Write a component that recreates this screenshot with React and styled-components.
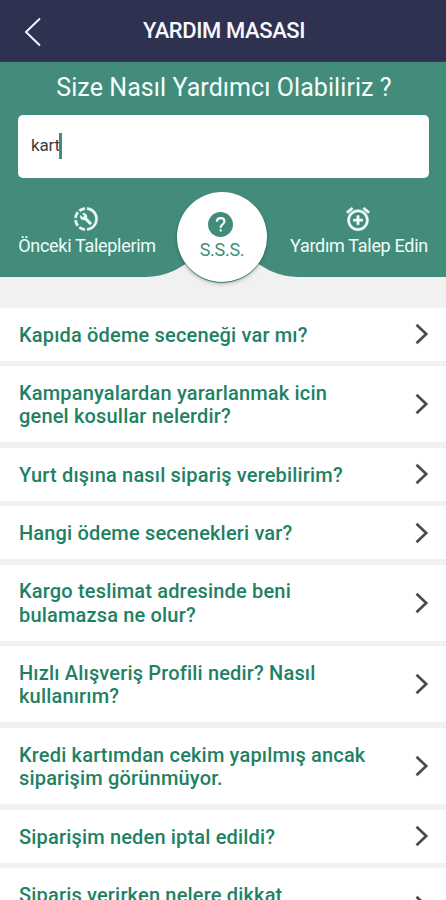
import React from 'react';
import styled, { createGlobalStyle } from 'styled-components';

const GlobalStyle = createGlobalStyle`
  * { box-sizing: border-box; }
  body { margin: 0; background: #f1f1f1; font-family: Roboto, sans-serif; }
`;

const Screen = styled.div`
  width: 446px;
  height: 900px;
  overflow: hidden;
  display: flex;
  flex-direction: column;
  background: #f1f1f1;
`;

const TopBar = styled.header`
  flex: none;
  height: 62px;
  display: grid;
  grid-template-columns: 66px 1fr 64px;
  align-items: center;
  background: #2f3151;
  border-bottom: 1px solid #2c3f53;
`;

const BackButton = styled.button`
  width: 66px;
  height: 62px;
  padding: 2px 0 0;
  border: 0;
  background: none;
  display: flex;
  align-items: center;
  justify-content: center;
`;

const Title = styled.h1`
  margin: 0;
  text-align: center;
  white-space: nowrap;
  font-size: 22px;
  line-height: 60px;
  font-weight: 500;
  letter-spacing: -0.4px;
  color: #f7f8ff;
`;

const Hero = styled.section`
  flex: none;
  position: relative;
  height: 214.5px;
  display: flex;
  flex-direction: column;
  background: #438c7c;
`;

const Heading = styled.h2`
  margin: 0;
  height: 53px;
  padding-left: 2px;
  text-align: center;
  white-space: nowrap;
  font-size: 25px;
  line-height: 51px;
  font-weight: 400;
  letter-spacing: 0.07px;
  color: #f4fffc;
`;

const SearchField = styled.div`
  height: 63px;
  margin: 0 17px 0 18px;
  padding: 0 12px 2px;
  display: flex;
  align-items: center;
  border-radius: 5px;
  background: #fff;
  font-size: 17px;
  line-height: 26px;
  letter-spacing: -0.15px;
  color: #3c3c3c;
`;

const SearchText = styled.span`
  padding: 0 0 2px 1px;
`;

const Caret = styled.span`
  width: 2.5px;
  height: 26px;
  margin-left: -1px;
  background: #438c7c;
`;

const Tabs = styled.nav`
  flex: 1;
  display: flex;
  justify-content: space-between;
  padding: 27px 18px 0 18px;
`;

const Tab = styled.div`
  width: 138px;
  display: flex;
  flex-direction: column;
  align-items: center;
  white-space: nowrap;
  font-size: 18px;
  line-height: 25px;
  letter-spacing: -0.3px;
  color: #eefdf8;
`;

const TabIcon = styled.svg`
  display: block;
  width: 28px;
  height: 28px;
  margin-right: 2px;
  fill: currentColor;
`;

const Notch = styled.svg`
  position: absolute;
  left: 136px;
  bottom: -1px;
  width: 172px;
  height: 41px;
`;

const ActiveTab = styled.div`
  position: absolute;
  left: 177px;
  top: 130px;
  width: 90px;
  height: 90px;
  padding-top: 20px;
  display: flex;
  flex-direction: column;
  align-items: center;
  border-radius: 50%;
  background: #fff;
  box-shadow: 0 1px 1px #277c68, 0 2px 4px rgba(0, 0, 0, 0.22);
  font-size: 18px;
  line-height: 26px;
  letter-spacing: -0.3px;
  color: #438c7c;
`;

const Badge = styled.span`
  width: 25px;
  height: 25px;
  margin-right: 3px;
  border-radius: 50%;
  background: #438c7c;
`;

const List = styled.ul`
  list-style: none;
  margin: 31.5px 0 0;
  padding: 0;
  display: flex;
  flex-direction: column;
  gap: 5.8px;
`;

const Row = styled.li`
  display: flex;
  align-items: center;
  justify-content: space-between;
  height: ${(p) => (p.$lines > 1 ? 76 : 52.5)}px;
  padding: 0 16px 0 19px;
  background: #fff;
`;

const Question = styled.span`
  padding-top: 2px;
  white-space: pre-line;
  font-size: 20px;
  line-height: 23.5px;
  font-weight: 500;
  letter-spacing: 0.17px;
  color: #1f8164;
`;

const Chevron = styled.svg`
  flex: none;
  width: 16px;
  height: 22px;
  fill: none;
  stroke: #4b4b4b;
  stroke-width: 2.7;
`;

const questions = [
  'Kapıda ödeme seceneği var mı?',
  'Kampanyalardan yararlanmak icin\ngenel kosullar nelerdir?',
  'Yurt dışına nasıl sipariş verebilirim?',
  'Hangi ödeme secenekleri var?',
  'Kargo teslimat adresinde beni\nbulamazsa ne olur?',
  'Hızlı Alışveriş Profili nedir? Nasıl\nkullanırım?',
  'Kredi kartımdan cekim yapılmış ancak\nsiparişim görünmüyor.',
  'Siparişim neden iptal edildi?',
  'Sipariş verirken nelere dikkat\n\u00a0',
];

export default function App() {
  return (
    <Screen lang="tr">
      <GlobalStyle />
      <TopBar>
        <BackButton aria-label="Geri">
          <svg width="18" height="30" viewBox="0 0 18 30" fill="none" stroke="#f2f3ff" strokeWidth="2">
            <path d="M16 1.5 2 15l14 13.5" />
          </svg>
        </BackButton>
        <Title>YARDIM MASASI</Title>
      </TopBar>
      <Hero>
        <Heading>Size Nasıl Yardımcı Olabiliriz ?</Heading>
        <SearchField>
          <SearchText>kart</SearchText>
          <Caret />
        </SearchField>
        <Tabs>
          <Tab>
            <TabIcon viewBox="0 0 24 24">
              <path d="M13 2.03v2.02c4.39.54 7.5 4.53 6.96 8.92-.46 3.64-3.32 6.53-6.96 6.96v2c5.5-.55 9.5-5.43 8.95-10.93C21.5 6.25 17.73 2.5 13 2.03M11 2.06C9.05 2.25 7.19 3 5.67 4.26L7.1 5.74C8.22 4.84 9.57 4.26 11 4.06v-2M4.26 5.67C3 7.19 2.25 9.04 2.05 11h2c.19-1.42.75-2.77 1.64-3.9L4.26 5.67M2.06 13c.2 1.96.97 3.81 2.21 5.33l1.42-1.43C4.81 15.77 4.24 14.42 4.06 13h-2M7.1 18.37l-1.43 1.37C7.18 21 9.04 21.79 11 22v-2c-1.42-.18-2.77-.75-3.9-1.63M16.82 15.19l-4.11-4.11c.41-1.04.18-2.26-.68-3.11-.9-.91-2.25-1.09-3.34-.59l1.94 1.94-1.35 1.36-1.99-1.95c-.54 1.09-.29 2.44.59 3.35.86.86 2.08 1.08 3.12.68l4.11 4.1c.18.19.45.19.63 0l1.04-1.03c.22-.18.22-.5.04-.64z" stroke="currentColor" strokeWidth="0.3" />
            </TabIcon>
            Önceki Taleplerim
          </Tab>
          <Tab>
            <TabIcon viewBox="0 0 24 24">
              <path d="M7.88 3.39 6.6 1.86 2 5.71l1.29 1.53 4.59-3.85zM22 5.72l-4.6-3.86-1.29 1.53 4.6 3.86L22 5.72zM12 4c-4.97 0-9 4.03-9 9s4.02 9 9 9c4.97 0 9-4.03 9-9s-4.03-9-9-9zm0 16c-3.87 0-7-3.13-7-7s3.13-7 7-7 7 3.13 7 7-3.13 7-7 7zm1-11h-2v3H8v2h3v3h2v-3h3v-2h-3V9z" stroke="currentColor" strokeWidth="0.4" />
            </TabIcon>
            Yardım Talep Edin
          </Tab>
        </Tabs>
        <Notch viewBox="0 0 172 41">
          <path d="M6 40C28 40 38 34 48 28L86 0l38 28c10 6 20 12 42 12v1H6z" fill="#f1f1f1" />
        </Notch>
        <ActiveTab>
          <Badge>
            <svg width="25" height="25" viewBox="0 0 25 25" fill="none" stroke="#fff" strokeWidth="2.1">
              <path d="M8.8 9.8c0-2.2 1.6-3.7 3.8-3.7s3.8 1.4 3.8 3.4c0 2.8-3.7 2.8-3.7 6.2" />
              <path d="M12.7 17.3v2.2" />
            </svg>
          </Badge>
          S.S.S.
        </ActiveTab>
      </Hero>
      <List>
        {questions.map((q) => (
          <Row key={q} $lines={q.split('\n').length}>
            <Question>{q}</Question>
            <Chevron viewBox="0 0 16 22">
              <path d="m2.5 1.8 9.7 9.2-9.7 9.2" />
            </Chevron>
          </Row>
        ))}
      </List>
    </Screen>
  );
}
